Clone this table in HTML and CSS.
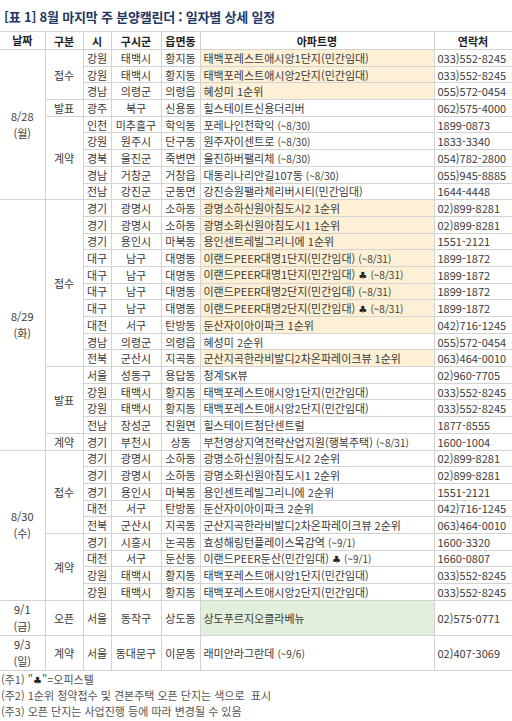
FILE: index.html
```html
<!DOCTYPE html>
<html lang="ko">
<head>
<meta charset="utf-8">
<title>분양캘린더</title>
<link rel="stylesheet" href="styles.css">
</head>
<body>
<h1 class="title">[표 1] 8월 마지막 주 분양캘린더 : 일자별 상세 일정</h1>
<table class="cal">
<colgroup>
<col class="c-date"><col class="c-type"><col class="c-si"><col class="c-gu"><col class="c-dong"><col class="c-apt"><col class="c-tel">
</colgroup>
<thead>
<tr><th class="date">날짜</th><th>구분</th><th>시</th><th>구시군</th><th>읍면동</th><th>아파트명</th><th>연락처</th></tr>
</thead>
<tbody>
<tr><td class="date" rowspan="9">8/28<br>(월)</td><td class="type" rowspan="3">접수</td><td>강원</td><td>태백시</td><td>황지동</td><td class="apt hl">태백포레스트애시앙1단지(민간임대)</td><td class="tel">033)552-8245</td></tr>
<tr><td>강원</td><td>태백시</td><td>황지동</td><td class="apt hl">태백포레스트애시앙2단지(민간임대)</td><td class="tel">033)552-8245</td></tr>
<tr><td>경남</td><td>의령군</td><td>의령읍</td><td class="apt hl">혜성미 1순위</td><td class="tel">055)572-0454</td></tr>
<tr><td class="type">발표</td><td>광주</td><td>북구</td><td>신용동</td><td class="apt">힐스테이트신용더리버</td><td class="tel">062)575-4000</td></tr>
<tr><td class="type" rowspan="5">계약</td><td>인천</td><td>미추홀구</td><td>학익동</td><td class="apt">포레나인천학익 <span class="sm">(~8/30)</span></td><td class="tel">1899-0873</td></tr>
<tr><td>강원</td><td>원주시</td><td>단구동</td><td class="apt">원주자이센트로 <span class="sm">(~8/30)</span></td><td class="tel">1833-3340</td></tr>
<tr><td>경북</td><td>울진군</td><td>죽변면</td><td class="apt">울진하버팰리체 <span class="sm">(~8/30)</span></td><td class="tel">054)782-2800</td></tr>
<tr><td>경남</td><td>거창군</td><td>거창읍</td><td class="apt">대동리나리안길107동 <span class="sm">(~8/30)</span></td><td class="tel">055)945-8885</td></tr>
<tr><td>전남</td><td>강진군</td><td>군동면</td><td class="apt">강진승원팰라체리버시티(민간임대)</td><td class="tel">1644-4448</td></tr>

<tr><td class="date" rowspan="15">8/29<br>(화)</td><td class="type" rowspan="10">접수</td><td>경기</td><td>광명시</td><td>소하동</td><td class="apt hl">광명소하신원아침도시2 1순위</td><td class="tel">02)899-8281</td></tr>
<tr><td>경기</td><td>광명시</td><td>소하동</td><td class="apt hl">광명소화신원아침도시1 1순위</td><td class="tel">02)899-8281</td></tr>
<tr><td>경기</td><td>용인시</td><td>마북동</td><td class="apt hl">용인센트레빌그리니에 1순위</td><td class="tel">1551-2121</td></tr>
<tr><td>대구</td><td>남구</td><td>대명동</td><td class="apt hl">이랜드PEER대명1단지(민간임대) <span class="sm">(~8/31)</span></td><td class="tel">1899-1872</td></tr>
<tr><td>대구</td><td>남구</td><td>대명동</td><td class="apt hl">이랜드PEER대명1단지(민간임대) <span class="club">♣</span> <span class="sm">(~8/31)</span></td><td class="tel">1899-1872</td></tr>
<tr><td>대구</td><td>남구</td><td>대명동</td><td class="apt hl">이랜드PEER대명2단지(민간임대) <span class="sm">(~8/31)</span></td><td class="tel">1899-1872</td></tr>
<tr><td>대구</td><td>남구</td><td>대명동</td><td class="apt hl">이랜드PEER대명2단지(민간임대) <span class="club">♣</span> <span class="sm">(~8/31)</span></td><td class="tel">1899-1872</td></tr>
<tr><td>대전</td><td>서구</td><td>탄방동</td><td class="apt hl">둔산자이아이파크 1순위</td><td class="tel">042)716-1245</td></tr>
<tr><td>경남</td><td>의령군</td><td>의령읍</td><td class="apt">혜성미 2순위</td><td class="tel">055)572-0454</td></tr>
<tr><td>전북</td><td>군산시</td><td>지곡동</td><td class="apt hl">군산지곡한라비발디2차온파레이크뷰 1순위</td><td class="tel">063)464-0010</td></tr>
<tr><td class="type" rowspan="4">발표</td><td>서울</td><td>성동구</td><td>용답동</td><td class="apt">청계SK뷰</td><td class="tel">02)960-7705</td></tr>
<tr><td>강원</td><td>태백시</td><td>황지동</td><td class="apt">태백포레스트애시앙1단지(민간임대)</td><td class="tel">033)552-8245</td></tr>
<tr><td>강원</td><td>태백시</td><td>황지동</td><td class="apt">태백포레스트애시앙2단지(민간임대)</td><td class="tel">033)552-8245</td></tr>
<tr><td>전남</td><td>장성군</td><td>진원면</td><td class="apt">힐스테이트첨단센트럴</td><td class="tel">1877-8555</td></tr>
<tr><td class="type">계약</td><td>경기</td><td>부천시</td><td>상동</td><td class="apt">부천영상지역전략산업지원(행복주택) <span class="sm">(~8/31)</span></td><td class="tel">1600-1004</td></tr>

<tr><td class="date" rowspan="9">8/30<br>(수)</td><td class="type" rowspan="5">접수</td><td>경기</td><td>광명시</td><td>소하동</td><td class="apt">광명소하신원아침도시2 2순위</td><td class="tel">02)899-8281</td></tr>
<tr><td>경기</td><td>광명시</td><td>소하동</td><td class="apt">광명소화신원아침도시1 2순위</td><td class="tel">02)899-8281</td></tr>
<tr><td>경기</td><td>용인시</td><td>마북동</td><td class="apt">용인센트레빌그리니에 2순위</td><td class="tel">1551-2121</td></tr>
<tr><td>대전</td><td>서구</td><td>탄방동</td><td class="apt">둔산자이아이파크 2순위</td><td class="tel">042)716-1245</td></tr>
<tr><td>전북</td><td>군산시</td><td>지곡동</td><td class="apt">군산지곡한라비발디2차온파레이크뷰 2순위</td><td class="tel">063)464-0010</td></tr>
<tr><td class="type" rowspan="4">계약</td><td>경기</td><td>시흥시</td><td>논곡동</td><td class="apt">효성해링턴플레이스목감역 <span class="sm">(~9/1)</span></td><td class="tel">1600-3320</td></tr>
<tr><td>대전</td><td>서구</td><td>둔산동</td><td class="apt">이랜드PEER둔산(민간임대) <span class="club">♣</span> <span class="sm">(~9/1)</span></td><td class="tel">1660-0807</td></tr>
<tr><td>강원</td><td>태백시</td><td>황지동</td><td class="apt">태백포레스트애시앙1단지(민간임대)</td><td class="tel">033)552-8245</td></tr>
<tr><td>강원</td><td>태백시</td><td>황지동</td><td class="apt">태백포레스트애시앙2단지(민간임대)</td><td class="tel">033)552-8245</td></tr>

<tr class="tall"><td class="date">9/1<br>(금)</td><td class="type">오픈</td><td>서울</td><td>동작구</td><td>상도동</td><td class="apt gr">상도푸르지오클라베뉴</td><td class="tel">02)575-0771</td></tr>
<tr class="tall"><td class="date">9/3<br>(일)</td><td class="type">계약</td><td>서울</td><td>동대문구</td><td>이문동</td><td class="apt">래미안라그란데 <span class="sm">(~9/6)</span></td><td class="tel">02)407-3069</td></tr>
</tbody>
</table>
<div class="notes">
<p>(주1) "<span class="club">♣</span>"=오피스텔</p>
<p>(주2) 1순위 청약접수 및 견본주택 오픈 단지는 색으로&nbsp; 표시</p>
<p>(주3) 오픈 단지는 사업진행 등에 따라 변경될 수 있음</p>
</div>
</body>
</html>
```
FILE: styles.css
```css
html, body {
  margin: 0;
  padding: 0;
  background: #ffffff;
}
body {
  width: 512px;
  font-family: "Noto Sans CJK KR", "Noto Sans", sans-serif;
  color: #3a3a3a;
}
.title {
  margin: 0;
  padding: 8px 0 0 4px;
  height: 23px;
  font-size: 13px;
  font-weight: 700;
  line-height: 18px;
  color: #1f3864;
  letter-spacing: -0.2px;
}
.cal {
  width: 512px;
  border-collapse: collapse;
  table-layout: fixed;
  font-size: 11px;
  line-height: 12px;
}
.c-date { width: 45px; }
.c-type { width: 38px; }
.c-si { width: 28px; }
.c-gu { width: 50px; }
.c-dong { width: 39px; }
.c-apt { width: 234px; }
.c-tel { width: 78px; }
.cal th, .cal td {
  border: 1px solid #d3d3d3;
  padding: 0;
  height: 15.7px;
  text-align: center;
  vertical-align: middle;
  white-space: nowrap;
  overflow: hidden;
}
.cal th {
  font-weight: 700;
  color: #222;
  height: 16px;
}
.cal .date {
  border-left: none;
  line-height: 17px;
}
.cal td.apt {
  text-align: left;
  padding-left: 3px;
}
.cal td.tel {
  text-align: left;
  padding-left: 3px;
}
.cal td.hl { background: #fdf0d5; }
.cal td.gr { background: #e2efda; }
.cal tr.tall td { height: 31.8px; }
.sm { font-size: 10px; }
.club { font-family: "DejaVu Sans", sans-serif; font-size: 10px; color: #222; }
.cal .sm, .cal .club { line-height: 10px; }
.notes {
  padding: 1px 0 0 1px;
  font-size: 11px;
  color: #555;
  line-height: 15.5px;
}
.notes p { margin: 0; }
```
